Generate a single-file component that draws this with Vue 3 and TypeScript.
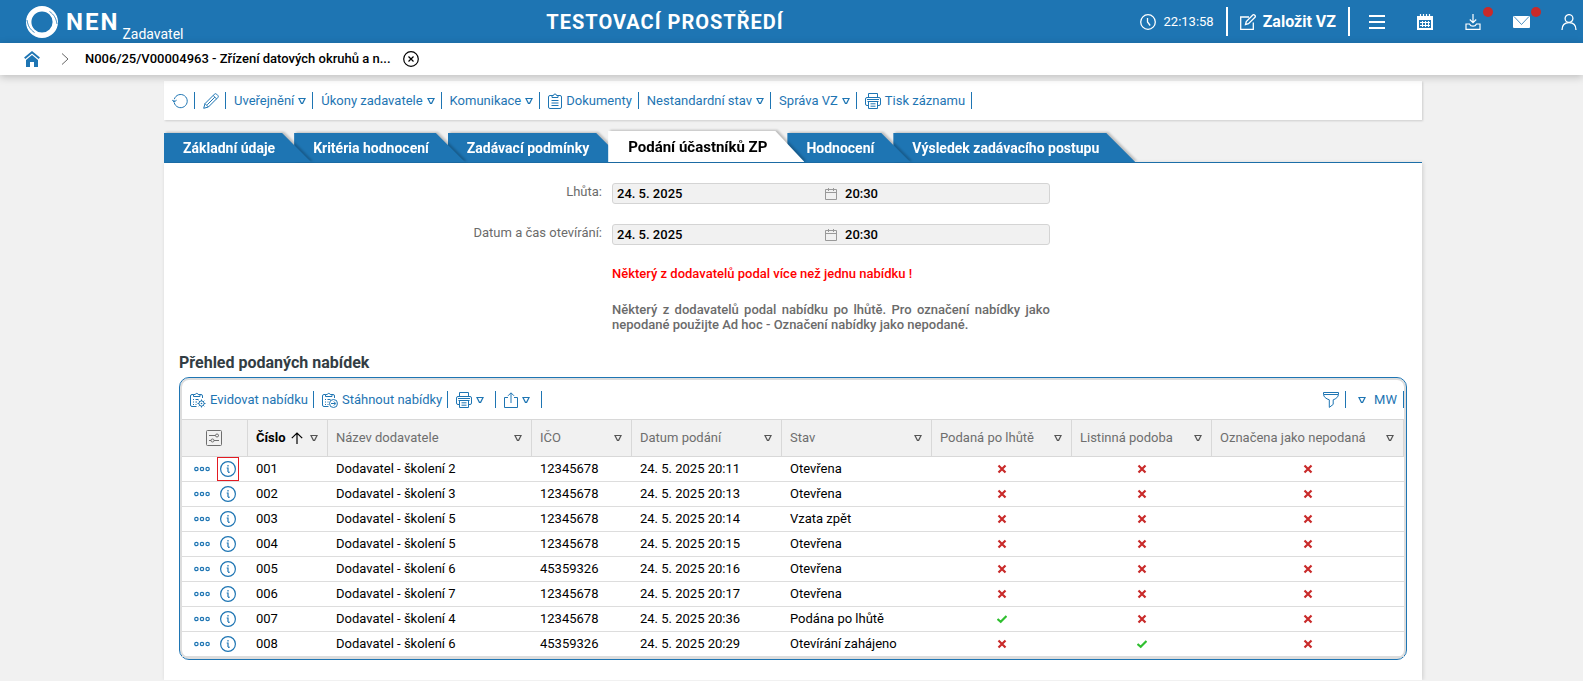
<script setup lang="ts">
interface Action { label: string; icon?: string; menu?: boolean; title?: string }
interface Column { label: string; sorted?: boolean }
interface Offer { no: string; supplier: string; ico: string; date: string; state: string; flags: boolean[] }

const recordActions: Action[] = [
  { label: '', icon: 'refresh', title: 'Obnovit' },
  { label: '', icon: 'pencil', title: 'Upravit' },
  { label: 'Uveřejnění', menu: true },
  { label: 'Úkony zadavatele', menu: true },
  { label: 'Komunikace', menu: true },
  { label: 'Dokumenty', icon: 'clipboard' },
  { label: 'Nestandardní stav', menu: true },
  { label: 'Správa VZ', menu: true },
  { label: 'Tisk záznamu', icon: 'printer' },
]

const tabs: string[] = [
  'Základní údaje', 'Kritéria hodnocení', 'Zadávací podmínky',
  'Podání účastníků ZP', 'Hodnocení', 'Výsledek zadávacího postupu',
]
const activeTab = 3

const fields = [
  { id: 'deadline', label: 'Lhůta:', date: '24. 5. 2025', time: '20:30' },
  { id: 'opening', label: 'Datum a čas otevírání:', date: '24. 5. 2025', time: '20:30' },
]

const gridActions: Action[] = [
  { label: 'Evidovat nabídku', icon: 'clip-gear' },
  { label: 'Stáhnout nabídky', icon: 'clip-arrow' },
  { label: '', icon: 'printer', menu: true, title: 'Tisk' },
  { label: '', icon: 'share', menu: true, title: 'Export' },
]

const columns: Column[] = [
  { label: 'Číslo', sorted: true },
  { label: 'Název dodavatele' },
  { label: 'IČO' },
  { label: 'Datum podání' },
  { label: 'Stav' },
  { label: 'Podaná po lhůtě' },
  { label: 'Listinná podoba' },
  { label: 'Označena jako nepodaná' },
]

const offers: Offer[] = [
  { no: '001', supplier: 'Dodavatel - školení 2', ico: '12345678', date: '24. 5. 2025 20:11', state: 'Otevřena', flags: [false, false, false] },
  { no: '002', supplier: 'Dodavatel - školení 3', ico: '12345678', date: '24. 5. 2025 20:13', state: 'Otevřena', flags: [false, false, false] },
  { no: '003', supplier: 'Dodavatel - školení 5', ico: '12345678', date: '24. 5. 2025 20:14', state: 'Vzata zpět', flags: [false, false, false] },
  { no: '004', supplier: 'Dodavatel - školení 5', ico: '12345678', date: '24. 5. 2025 20:15', state: 'Otevřena', flags: [false, false, false] },
  { no: '005', supplier: 'Dodavatel - školení 6', ico: '45359326', date: '24. 5. 2025 20:16', state: 'Otevřena', flags: [false, false, false] },
  { no: '006', supplier: 'Dodavatel - školení 7', ico: '12345678', date: '24. 5. 2025 20:17', state: 'Otevřena', flags: [false, false, false] },
  { no: '007', supplier: 'Dodavatel - školení 4', ico: '12345678', date: '24. 5. 2025 20:36', state: 'Podána po lhůtě', flags: [true, false, false] },
  { no: '008', supplier: 'Dodavatel - školení 6', ico: '45359326', date: '24. 5. 2025 20:29', state: 'Otevírání zahájeno', flags: [false, true, false] },
]
</script>

<template>
  <div class="page">
    <svg class="sprite" aria-hidden="true">
      <symbol id="i-tri" viewBox="0 0 8 8"><path d="M1 1.5h6L4.6 6.3H3.4z" fill="none" stroke="currentColor" stroke-width="1.2" /></symbol>
      <symbol id="i-refresh" viewBox="0 0 16 16"><path d="M2.200 9.600A6.600 6.600 0 1 0 2.300 6.200M2 9.200V7M.200 6.800L2.100 9 4.600 7.200" fill="none" stroke="currentColor" /></symbol>
      <symbol id="i-pencil" viewBox="0 0 16 16"><path d="M.700 15.300L2 10.600 11.400 1.200a1.600 1.600 0 0 1 2.200 0l1.200 1.200a1.600 1.600 0 0 1 0 2.200L5.400 14zM10.200 2.500l3.400 3.400M11.800 4.200L4.200 11.800M2 10.600L5.400 14" fill="none" stroke="currentColor" /></symbol>
      <symbol id="i-clipboard" viewBox="0 0 14 16"><path d="M4 2.500H2A1.500 1.500 0 0 0 .500 4v10A1.500 1.500 0 0 0 2 15.500h10a1.500 1.500 0 0 0 1.500-1.500V4A1.500 1.500 0 0 0 12 2.500h-2M4 4.500v-2h1.500a1.500 1.500 0 0 1 3 0H10v2zM3.500 7.500h7M3.500 10h7M3.500 12.500h7" fill="none" stroke="currentColor" /></symbol>
      <symbol id="i-printer" viewBox="0 0 16 16"><path d="M3.500 4.500v-4h9v4M3.500 12.500H2A1.500 1.500 0 0 1 .500 11V6A1.500 1.500 0 0 1 2 4.500h12A1.500 1.500 0 0 1 15.500 6v5a1.500 1.500 0 0 1-1.500 1.500h-1.500M3.500 8.500h9v7h-9zM5.500 10.800h5M5.500 13.200h5M2 6.500h12M2.500 8.500h11" fill="none" stroke="currentColor" /></symbol>
      <symbol id="i-clip-gear" viewBox="0 0 16 16"><path d="M6.500 14.500H2A1.500 1.500 0 0 1 .500 13V4A1.500 1.500 0 0 1 2 2.500h1.500M10 2.500h1A1.500 1.500 0 0 1 12.500 4v2M3.500 4.500v-2h1.800a1.500 1.500 0 0 1 2.900 0H10v2zM3 7.500h1M5.500 7.500h3M3 10h1M5.500 10h1.500M3 12.500h1M5.500 12.500h1M11.500 7.500v8M7.500 11.500h8M8.700 8.700l5.600 5.600M14.300 8.700l-5.600 5.600" fill="none" stroke="currentColor" /><circle cx="11.500" cy="11.500" r="2.600" fill="#fff" stroke="currentColor" /><circle cx="11.500" cy="11.500" r=".8" fill="currentColor" /></symbol>
      <symbol id="i-clip-arrow" viewBox="0 0 16 16"><path d="M6.500 14.500H2A1.500 1.500 0 0 1 .500 13V4A1.500 1.500 0 0 1 2 2.500h1.500M10 2.500h1A1.500 1.500 0 0 1 12.500 4v2M3.500 4.500v-2h1.800a1.500 1.500 0 0 1 2.900 0H10v2zM3 7.500h1M5.500 7.500h3M3 10h1M5.500 10h1M3 12.500h1M5.500 12.500h1M9 11.500h4.500M11.800 9.500l2 2-2 2" fill="none" stroke="currentColor" /><circle cx="11.500" cy="11.500" r="4" fill="none" stroke="currentColor" /></symbol>
      <symbol id="i-share" viewBox="0 0 14 16"><path d="M4 5.500H.500v10h13v-10H10M7 11V1M4 3.800L7 .8l3 3" fill="none" stroke="currentColor" /></symbol>
      <symbol id="i-funnel" viewBox="0 0 16 16"><path d="M.500.500h15v1.700c0 2.600-2.600 4.800-5.300 5.600v4.600L6.300 15.400V7.800C3 6.800.500 4.800.500 2.200zM1 2.500h14" fill="none" stroke="currentColor" /></symbol>
      <symbol id="i-sliders" viewBox="0 0 16 16"><path d="M1.500.500h13a1 1 0 0 1 1 1v13a1 1 0 0 1-1 1h-13a1 1 0 0 1-1-1v-13a1 1 0 0 1 1-1zM3 5.500h6.500M12.500 5.500H13M3 10.500h2M8 10.500h5" fill="none" stroke="currentColor" /><circle cx="11" cy="5.500" r="1.500" fill="none" stroke="currentColor" /><circle cx="6.500" cy="10.500" r="1.500" fill="none" stroke="currentColor" /></symbol>
      <symbol id="i-dots" viewBox="0 0 16 6"><g fill="none" stroke="currentColor" stroke-width="1.200"><circle cx="2.400" cy="3" r="1.700" /><circle cx="8" cy="3" r="1.700" /><circle cx="13.600" cy="3" r="1.700" /></g></symbol>
      <symbol id="i-info" viewBox="0 0 16 16"><circle cx="8" cy="8" r="7.400" fill="none" stroke="currentColor" stroke-width="1.200" /><path d="M8 4v1.400M6.700 7H8v4M8 11.300c.7 0 1.200 0 1.700-.5" fill="none" stroke="currentColor" stroke-width="1.200" /></symbol>
      <symbol id="i-cross" viewBox="0 0 10 10"><path d="M1.500 1.500l7 7M8.500 1.500l-7 7" fill="none" stroke="currentColor" stroke-width="2.200" /></symbol>
      <symbol id="i-check" viewBox="0 0 10 10"><path d="M.500 5L3.700 7.800 9.500 2" fill="none" stroke="currentColor" stroke-width="2.200" /></symbol>
      <symbol id="i-up" viewBox="0 0 12 12"><path d="M6 12V1M.800 6.200L6 1l5.200 5.200" fill="none" stroke="currentColor" stroke-width="1.200" /></symbol>
      <symbol id="i-cal" viewBox="0 0 12 12"><path d="M.500 1.500h11v10H.500zM.500 4.500h11M3.500 0v3M8.500 0v3" fill="none" stroke="currentColor" /></symbol>
      <symbol id="i-clock" viewBox="0 0 16 16"><circle cx="8" cy="8" r="7.300" fill="none" stroke="currentColor" stroke-width="1.300" /><path d="M7.500 4v4l2.700 3.500" fill="none" stroke="currentColor" stroke-width="1.300" /></symbol>
      <symbol id="i-edit" viewBox="0 0 16 16"><path d="M9 3H.700v12.300h12.600V8.500M5.500 10.500l.8-3L12.800 1a1.200 1.200 0 0 1 1.700 0l.5.500a1.200 1.200 0 0 1 0 1.700L8.500 9.700z" fill="none" stroke="currentColor" stroke-width="1.300" /></symbol>
      <symbol id="i-menu" viewBox="0 0 16 16"><path d="M0 2h16M0 8h16M0 14h16" fill="none" stroke="currentColor" stroke-width="2" /></symbol>
      <symbol id="i-calendar" viewBox="0 0 16 16"><path d="M0 2h16v14H0z" fill="currentColor" /><path d="M3.500 0v3M6.500 0v3M9.500 0v3M12.500 0v3" stroke="currentColor" stroke-width="1.200" /><path d="M2 6h12v8H2z" fill="#1e75b3" /><path d="M3 8.500h10M3 11.500h10M5.500 7v6M8.500 7v6M11.500 7v6" stroke="currentColor" stroke-width="1" /></symbol>
      <symbol id="i-inbox" viewBox="0 0 16 16"><path d="M8 0v8.500M4.800 5.500L8 8.700l3.200-3.200M4.500 10H1v5.300h14V10h-3.500c-.6 1.300-1.700 2.200-3.500 2.200S5.100 11.300 4.500 10z" fill="none" stroke="currentColor" stroke-width="1.200" /></symbol>
      <symbol id="i-mail" viewBox="0 0 17 12"><rect width="17" height="12" rx="1" fill="currentColor" /><path d="M1 .500l7.500 8L16 .500" fill="none" stroke="#1e75b3" stroke-width=".8" /></symbol>
      <symbol id="i-user" viewBox="0 0 16 16"><circle cx="8" cy="4.500" r="3.900" fill="none" stroke="currentColor" stroke-width="1.300" /><path d="M1 16c0-4.500 2.500-7.300 7-7.300s7 2.800 7 7.300" fill="none" stroke="currentColor" stroke-width="1.300" /></symbol>
      <symbol id="i-home" viewBox="0 0 16 16"><path d="M.700 7.300L8 1.300l7.300 6" fill="none" stroke="currentColor" stroke-width="1.900" /><path d="M2 9l6-5 6 5v7h-4v-5H6v5H2z" fill="currentColor" /></symbol>
      <symbol id="i-chevron" viewBox="0 0 8 12"><path d="M1 .500L7 6l-6 5.500" fill="none" stroke="currentColor" /></symbol>
      <symbol id="i-close" viewBox="0 0 16 16"><circle cx="8" cy="8" r="7.300" fill="none" stroke="currentColor" stroke-width="1.200" /><path d="M5.500 5.500l5 5M10.500 5.500l-5 5" fill="none" stroke="currentColor" stroke-width="1.200" /></symbol>
      <symbol id="i-logo" viewBox="0 0 32 32"><circle cx="16" cy="16" r="13.300" fill="none" stroke="currentColor" stroke-width="5.400" /><path d="M1 14c1 6 3 9.500 7.500 12.500M31 18c-1-6-3-9.500-7.500-12.500" fill="none" stroke="#1e75b3" stroke-width=".8" /></symbol>
    </svg>

    <header class="topbar">
      <a class="brand" href="#">
        <svg class="logo" aria-hidden="true"><use href="#i-logo" /></svg>
        <span class="brand-name">NEN</span>
        <span class="brand-role">Zadavatel</span>
      </a>
      <strong class="env">TESTOVACÍ PROSTŘEDÍ</strong>
      <div class="top-actions">
        <div class="clock"><svg class="icon" aria-hidden="true"><use href="#i-clock" /></svg><span>22:13:58</span></div>
        <button class="create" type="button"><svg class="icon" aria-hidden="true"><use href="#i-edit" /></svg>Založit VZ</button>
        <nav class="top-icons">
          <button type="button" aria-label="Menu"><svg class="icon"><use href="#i-menu" /></svg></button>
          <button type="button" aria-label="Kalendář"><svg class="icon"><use href="#i-calendar" /></svg></button>
          <button type="button" aria-label="Stažené soubory"><svg class="icon"><use href="#i-inbox" /></svg><i class="dot" /></button>
          <button type="button" aria-label="Zprávy"><svg class="icon mail"><use href="#i-mail" /></svg><i class="dot" /></button>
          <button type="button" aria-label="Uživatel"><svg class="icon"><use href="#i-user" /></svg></button>
        </nav>
      </div>
    </header>

    <nav class="crumbs">
      <a class="home" href="#" aria-label="Domů"><svg class="icon"><use href="#i-home" /></svg></a>
      <svg class="chevron" aria-hidden="true"><use href="#i-chevron" /></svg>
      <a class="crumb" href="#">N006/25/V00004963 - Zřízení datových okruhů a n...</a>
      <button class="close" type="button" aria-label="Zavřít"><svg class="icon"><use href="#i-close" /></svg></button>
    </nav>

    <main class="main">
      <div class="record-bar">
        <button v-for="(a, i) in recordActions" :key="i" class="action" type="button" :aria-label="a.title">
          <svg v-if="a.icon" class="icon" :class="a.icon" aria-hidden="true"><use :href="'#i-' + a.icon" /></svg>
          <span v-if="a.label">{{ a.label }}</span>
          <svg v-if="a.menu" class="tri" aria-hidden="true"><use href="#i-tri" /></svg>
        </button>
      </div>

      <ul class="tabs">
        <li v-for="(t, i) in tabs" :key="t" class="tab" :class="{ active: i === activeTab }">
          <a href="#">{{ t }}</a>
        </li>
      </ul>

      <section class="content">
        <div class="form">
          <template v-for="f in fields" :key="f.id">
            <label :for="f.id">{{ f.label }}</label>
            <div class="datetime">
              <input :id="f.id" class="date" type="text" :value="f.date" readonly>
              <svg class="cal" aria-hidden="true"><use href="#i-cal" /></svg>
              <input class="time" type="text" :value="f.time" :aria-label="f.label + ' čas'" readonly>
            </div>
          </template>
          <p class="warn">Některý z dodavatelů podal více než jednu nabídku !</p>
          <p class="note">Některý z dodavatelů podal nabídku po lhůtě. Pro označení nabídky jako nepodané použijte Ad hoc - Označení nabídky jako nepodané.</p>
        </div>

        <h2>Přehled podaných nabídek</h2>
        <div class="panel">
          <div class="panel-bar">
            <button v-for="(a, i) in gridActions" :key="i" class="action" :class="{ compact: !a.label }" type="button" :aria-label="a.title">
              <svg class="icon" :class="a.icon" aria-hidden="true"><use :href="'#i-' + a.icon" /></svg>
              <span v-if="a.label">{{ a.label }}</span>
              <svg v-if="a.menu" class="tri" aria-hidden="true"><use href="#i-tri" /></svg>
            </button>
            <div class="right">
              <button class="action" type="button" aria-label="Filtr"><svg class="icon"><use href="#i-funnel" /></svg></button>
              <button class="action view" type="button"><svg class="tri" aria-hidden="true"><use href="#i-tri" /></svg><span>MW</span></button>
            </div>
          </div>
          <table>
            <colgroup>
              <col class="w-tools"><col class="w-no"><col class="w-supplier"><col class="w-ico"><col class="w-date"><col class="w-date"><col class="w-flag"><col class="w-flag"><col>
            </colgroup>
            <thead>
              <tr>
                <th class="tools"><button type="button" aria-label="Nastavení sloupců"><svg class="icon"><use href="#i-sliders" /></svg></button></th>
                <th v-for="c in columns" :key="c.label" :class="{ sorted: c.sorted }" scope="col">
                  <div class="head">
                    <span>{{ c.label }}</span>
                    <svg v-if="c.sorted" class="up" aria-hidden="true"><use href="#i-up" /></svg>
                    <button type="button" :aria-label="'Filtr ' + c.label"><svg class="tri"><use href="#i-tri" /></svg></button>
                  </div>
                </th>
              </tr>
            </thead>
            <tbody>
              <tr v-for="(o, i) in offers" :key="o.no">
                <td class="tools">
                  <div class="row-tools">
                    <button type="button" aria-label="Další akce"><svg class="dots"><use href="#i-dots" /></svg></button>
                    <button class="info" :class="{ marked: i === 0 }" type="button" aria-label="Detail"><svg class="icon"><use href="#i-info" /></svg></button>
                  </div>
                </td>
                <td>{{ o.no }}</td>
                <td>{{ o.supplier }}</td>
                <td>{{ o.ico }}</td>
                <td>{{ o.date }}</td>
                <td>{{ o.state }}</td>
                <td v-for="(f, k) in o.flags" :key="k" class="flag" :class="f ? 'yes' : 'no'">
                  <svg role="img" :aria-label="f ? 'Ano' : 'Ne'"><use :href="f ? '#i-check' : '#i-cross'" /></svg>
                </td>
              </tr>
            </tbody>
          </table>
        </div>
      </section>
    </main>
  </div>
</template>

<style>
body {
  background: #f1f1f1;
}
</style>

<style scoped>
* {
  box-sizing: border-box;
}
.page {
  font: 13px/16px Roboto, "Noto Sans", sans-serif;
  color: #000;
}
.sprite {
  position: absolute;
  width: 0;
  height: 0;
}
button {
  margin: 0;
  padding: 0;
  border: 0;
  background: none;
  color: inherit;
  font: inherit;
  cursor: pointer;
}
a {
  color: inherit;
  text-decoration: none;
}
svg {
  display: block;
  flex: none;
}
.icon {
  width: 16px;
  height: 16px;
}
.tri {
  width: 8px;
  height: 8px;
}

.topbar {
  display: grid;
  grid-template-columns: 1fr auto 1fr;
  align-items: center;
  height: 43px;
  background: #1e75b3;
  color: #fff;
}
.brand {
  display: flex;
  align-items: center;
  padding-left: 26px;
}
.logo {
  width: 32px;
  height: 32px;
}
.brand-name {
  margin-left: 8px;
  font-size: 24px;
  line-height: 28px;
  font-weight: 700;
  letter-spacing: 2px;
}
.brand-role {
  align-self: flex-end;
  margin: 0 0 -4px 3px;
  font-size: 14px;
  line-height: 16px;
}
.env {
  margin-right: 253px;
  font-size: 20px;
  line-height: 24px;
  letter-spacing: 1px;
}
.top-actions {
  display: flex;
  align-items: center;
  justify-content: flex-end;
}
.clock {
  display: flex;
  align-items: center;
  gap: 8px;
  height: 29px;
  padding-right: 12px;
  border-right: 2px solid #fff;
}
.create {
  display: flex;
  align-items: center;
  gap: 7px;
  height: 29px;
  padding: 0 12px;
  border-right: 2px solid #fff;
  font-size: 16px;
  font-weight: 700;
}
.top-icons {
  display: flex;
  gap: 20px;
  padding-left: 13px;
}
.top-icons button {
  position: relative;
  display: flex;
  align-items: center;
  justify-content: center;
  width: 28px;
  height: 28px;
}
.mail {
  width: 17px;
  height: 12px;
}
.dot {
  position: absolute;
  top: -1px;
  right: -6px;
  width: 10px;
  height: 10px;
  border-radius: 50%;
  background: #c92a2a;
}

.crumbs {
  position: relative;
  display: flex;
  align-items: center;
  height: 32px;
  padding-left: 24px;
  background: #fff;
  box-shadow: 0 2px 8px rgba(0, 0, 0, 0.22);
}
.home {
  color: #1e75b3;
}
.chevron {
  width: 8px;
  height: 12px;
  margin: 0 16px 0 21px;
  color: #666;
}
.crumb {
  font-weight: 500;
}
.close {
  margin-left: 12px;
}

.main {
  padding: 6px 161px 0 164px;
}
.record-bar {
  display: flex;
  align-items: center;
  height: 39px;
  background: #fff;
  box-shadow: 1px 1px 2px rgba(0, 0, 0, 0.15);
}
.action {
  display: flex;
  align-items: center;
  gap: 4px;
  height: 17px;
  padding: 0 6px 0 8px;
  border-right: 1px solid #1e75b3;
  color: #1e75b3;
  white-space: nowrap;
}
.icon.clipboard,
.icon.share {
  width: 14px;
}
.tabs {
  display: flex;
  align-items: flex-end;
  margin: 11px 0 0;
  padding: 0;
  border-bottom: 1px solid #1e75b3;
  list-style: none;
}
.tab {
  position: relative;
  margin-right: -17px;
  filter: drop-shadow(2px -1px 1px rgba(0, 0, 0, 0.22));
}
.tab:nth-child(1) { z-index: 5; }
.tab:nth-child(2) { z-index: 4; }
.tab:nth-child(3) { z-index: 3; }
.tab:nth-child(4) { z-index: 6; }
.tab:nth-child(5) { z-index: 2; }
.tab:nth-child(6) { z-index: 1; }
.tab a {
  display: block;
  height: 29px;
  padding: 0 36px 0 19px;
  background: #1e75b3;
  clip-path: polygon(0 0, calc(100% - 29px) 0, 100% 100%, 0 100%);
  color: #fff;
  font-size: 14px;
  line-height: 31px;
  font-weight: 700;
  white-space: nowrap;
}
.tab.active a {
  height: 31px;
  padding: 0 37px 0 20px;
  background: #fff;
  color: #000;
  font-size: 15px;
  line-height: 32px;
}

.content {
  padding: 20px 15px;
  background: #fff;
  box-shadow: 1px 0 4px rgba(0, 0, 0, 0.15);
}
.form {
  display: grid;
  grid-template-columns: 423px 438px;
  column-gap: 10px;
  row-gap: 20px;
}
.form label {
  color: #6b6b6b;
  line-height: 18px;
  text-align: right;
}
.datetime {
  display: flex;
  align-items: center;
  height: 21px;
  padding: 0 4px;
  border: 1px solid #d4d4d4;
  border-radius: 3px;
  background: #f1f1f1;
}
.datetime input {
  min-width: 0;
  padding: 0;
  border: 0;
  outline: 0;
  background: none;
  color: #000;
  font: inherit;
  font-weight: 500;
}
.date {
  width: 208px;
}
.cal {
  width: 12px;
  height: 12px;
  color: #999;
}
.time {
  flex: 1;
  margin-left: 8px;
}
.form p {
  grid-column: 2;
  margin: 0;
  font-weight: 500;
  line-height: 15px;
}
.form .warn {
  color: #f00;
  line-height: 17px;
}
.form .note {
  color: #6b6b6b;
  text-align: justify;
}
h2 {
  margin: 21px 0 4px;
  color: #333d44;
  font-size: 16px;
  line-height: 20px;
  font-weight: 700;
}

.panel {
  border: 1px solid #1e75b3;
  border-radius: 10px;
  background: #fff;
  box-shadow: inset 0 0 0 2px #ddd;
  padding: 2px;
}
.panel-bar {
  display: flex;
  align-items: center;
  height: 39px;
}
.panel-bar .action {
  padding-right: 5px;
}
.panel-bar .right {
  display: flex;
  margin-left: auto;
}
.panel-bar .compact {
  padding-right: 11px;
}
.panel-bar .view {
  gap: 8px;
  padding-left: 12px;
}
.panel-bar .right .action {
  padding-right: 6px;
}
table {
  width: 100%;
  table-layout: fixed;
  border-collapse: separate;
  border-spacing: 0;
}
.w-tools { width: 66px; }
.w-no { width: 80px; }
.w-supplier { width: 204px; }
.w-ico { width: 100px; }
.w-date { width: 150px; }
.w-flag { width: 140px; }
th {
  height: 38px;
  padding: 0 9px 0 8px;
  border: 1px solid #d8d8d8;
  border-left: 0;
  background: #f1f1f1;
  color: #6e6e6e;
  font-weight: 400;
  text-align: left;
  white-space: nowrap;
}
th.tools button {
  display: block;
  margin: 0 auto;
}
th.sorted {
  color: #000;
  font-weight: 700;
}
.head {
  display: flex;
  align-items: center;
  gap: 5px;
}
.head button {
  margin-left: auto;
  color: #555;
}
.up {
  width: 12px;
  height: 12px;
}
td {
  height: 25px;
  padding: 0 8px;
  border-bottom: 1px solid #ddd;
  white-space: nowrap;
}
td.tools {
  padding: 0;
}
.row-tools {
  display: flex;
  align-items: center;
  gap: 7px;
  height: 24px;
  padding-left: 12px;
  color: #1e75b3;
}
.dots {
  width: 16px;
  height: 6px;
}
.info {
  display: flex;
  align-items: center;
  justify-content: center;
  width: 22px;
  height: 24px;
  border: 1px solid transparent;
}
.info.marked {
  border-color: #e31b23;
}
.flag svg {
  width: 10px;
  height: 10px;
  margin: 0 auto;
}
.no {
  color: #c92a2a;
}
.yes {
  color: #2fbf2f;
}
</style>
